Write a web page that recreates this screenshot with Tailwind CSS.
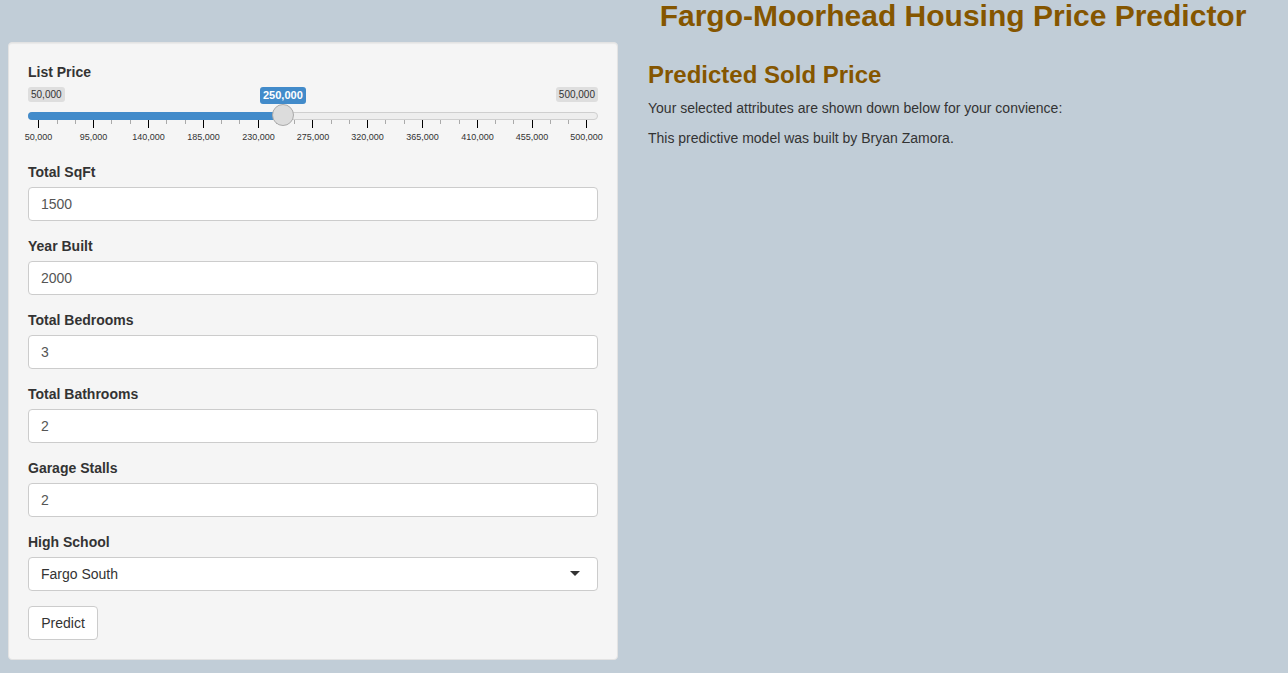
<!DOCTYPE html>
<html lang="en">
<head>
    <meta charset="UTF-8">
    <title>Fargo-Moorhead Housing Price Predictor</title>
    <script src="https://cdn.jsdelivr.net/npm/@tailwindcss/browser@4"></script>
</head>
<body class="bg-[#c1cdd7] h-[673px] overflow-hidden font-['Liberation_Sans',Arial,sans-serif] text-[14px] leading-[20px] text-[#333]">
    <div class="flex flex-col">
        <h2 class="pl-[618px] w-[1288px] text-center text-[#855600] text-[30px] font-bold leading-[31px] h-[42px]">Fargo-Moorhead Housing Price Predictor</h2>
        <div class="flex pl-[8px]">
            <!-- Sidebar -->
            <div class="w-[610px] h-[618px] bg-[#f5f5f5] border border-[#e3e3e3] rounded-[4px] pt-[19px] px-[19px] shadow-[inset_0_1px_1px_rgba(0,0,0,0.05)]">
                <label class="block font-bold h-[20px]">List Price</label>

                <!-- Slider -->
                <div class="relative h-[80px] w-[570px]">
                    <div class="flex justify-between h-[30px] pt-[5px] text-[10px] leading-[15px]">
                        <span class="h-[15px] bg-[#dedede] rounded-[3px] px-[3px]">50,000</span>
                        <span class="h-[15px] bg-[#dedede] rounded-[3px] px-[3px]">500,000</span>
                    </div>
                    <span class="absolute left-[232px] top-[5px] bg-[#428bca] rounded-[3px] px-[3px] text-[11px] leading-[17px] font-bold text-white">250,000</span>

                    <div class="h-[8px] bg-[#eeeeee] border border-[#cfcfcf] rounded-[4px]"></div>
                    <div class="absolute left-0 top-[30px] h-[8px] w-[250px] bg-[#428bca] rounded-l-[4px]"></div>
                    <div class="absolute left-[244px] top-[22px] w-[22px] h-[22px] rounded-full bg-[#dcdcdc] border border-[#aaaaaa]"></div>

                    <svg class="block" width="570" height="9" viewBox="28 120 570 9" shape-rendering="crispEdges">
                        <g fill="#000">
                            <rect x="38" y="120" width="1" height="8"/><rect x="93" y="120" width="1" height="8"/>
                            <rect x="148" y="120" width="1" height="8"/><rect x="203" y="120" width="1" height="8"/>
                            <rect x="258" y="120" width="1" height="8"/><rect x="312" y="120" width="1" height="8"/>
                            <rect x="367" y="120" width="1" height="8"/><rect x="422" y="120" width="1" height="8"/>
                            <rect x="477" y="120" width="1" height="8"/><rect x="532" y="120" width="1" height="8"/>
                            <rect x="586" y="120" width="1" height="8"/>
                        </g>
                        <g fill="#aaa">
                            <rect x="57" y="120" width="1" height="4"/><rect x="75" y="120" width="1" height="4"/>
                            <rect x="111" y="120" width="1" height="4"/><rect x="130" y="120" width="1" height="4"/>
                            <rect x="166" y="120" width="1" height="4"/><rect x="185" y="120" width="1" height="4"/>
                            <rect x="221" y="120" width="1" height="4"/><rect x="239" y="120" width="1" height="4"/>
                            <rect x="276" y="120" width="1" height="4"/><rect x="294" y="120" width="1" height="4"/>
                            <rect x="331" y="120" width="1" height="4"/><rect x="349" y="120" width="1" height="4"/>
                            <rect x="385" y="120" width="1" height="4"/><rect x="404" y="120" width="1" height="4"/>
                            <rect x="440" y="120" width="1" height="4"/><rect x="459" y="120" width="1" height="4"/>
                            <rect x="495" y="120" width="1" height="4"/><rect x="513" y="120" width="1" height="4"/>
                            <rect x="550" y="120" width="1" height="4"/><rect x="568" y="120" width="1" height="4"/>
                        </g>
                    </svg>
                    <div class="flex -ml-[17px] w-[610px] text-[9px] leading-[16px] text-center text-[#333]">
                        <span class="w-[55px]">50,000</span>
                        <span class="w-[55px]">95,000</span>
                        <span class="w-[55px]">140,000</span>
                        <span class="w-[55px]">185,000</span>
                        <span class="w-[55px]">230,000</span>
                        <span class="w-[54px]">275,000</span>
                        <span class="w-[55px]">320,000</span>
                        <span class="w-[55px]">365,000</span>
                        <span class="w-[55px]">410,000</span>
                        <span class="w-[54px]">455,000</span>
                        <span class="w-[55px]">500,000</span>
                    </div>
                </div>

                <div class="mb-[15px]">
                    <label class="block font-bold mb-[5px]">Total SqFt</label>
                    <input value="1500" class="block w-full h-[34px] bg-white border border-[#ccc] rounded-[4px] px-[12px] text-[#555]">
                </div>
                <div class="mb-[15px]">
                    <label class="block font-bold mb-[5px]">Year Built</label>
                    <input value="2000" class="block w-full h-[34px] bg-white border border-[#ccc] rounded-[4px] px-[12px] text-[#555]">
                </div>
                <div class="mb-[15px]">
                    <label class="block font-bold mb-[5px]">Total Bedrooms</label>
                    <input value="3" class="block w-full h-[34px] bg-white border border-[#ccc] rounded-[4px] px-[12px] text-[#555]">
                </div>
                <div class="mb-[15px]">
                    <label class="block font-bold mb-[5px]">Total Bathrooms</label>
                    <input value="2" class="block w-full h-[34px] bg-white border border-[#ccc] rounded-[4px] px-[12px] text-[#555]">
                </div>
                <div class="mb-[15px]">
                    <label class="block font-bold mb-[5px]">Garage Stalls</label>
                    <input value="2" class="block w-full h-[34px] bg-white border border-[#ccc] rounded-[4px] px-[12px] text-[#555]">
                </div>
                <div class="mb-[15px]">
                    <label class="block font-bold mb-[5px]">High School</label>
                    <div class="flex items-center justify-between h-[34px] bg-white border border-[#ccc] rounded-[4px] pl-[12px] pr-[17px]">
                        <span>Fargo South</span>
                        <svg class="mb-[1px]" width="10" height="5" viewBox="0 0 10 5"><path d="M0 0H10L5 5Z" fill="#333"/></svg>
                    </div>
                </div>
                <button class="block h-[34px] w-[70px] bg-white border border-[#ccc] rounded-[4px] text-[#333]">Predict</button>
            </div>

            <!-- Main -->
            <div class="pl-[30px] pt-[20px]">
                <h3 class="text-[#855600] text-[24px] font-bold leading-[26px]">Predicted Sold Price</h3>
                <p class="mt-[10px]">Your selected attributes are shown down below for your convience:</p>
                <p class="mt-[10px]">This predictive model was built by Bryan Zamora.</p>
            </div>
        </div>
    </div>
</body>
</html>
